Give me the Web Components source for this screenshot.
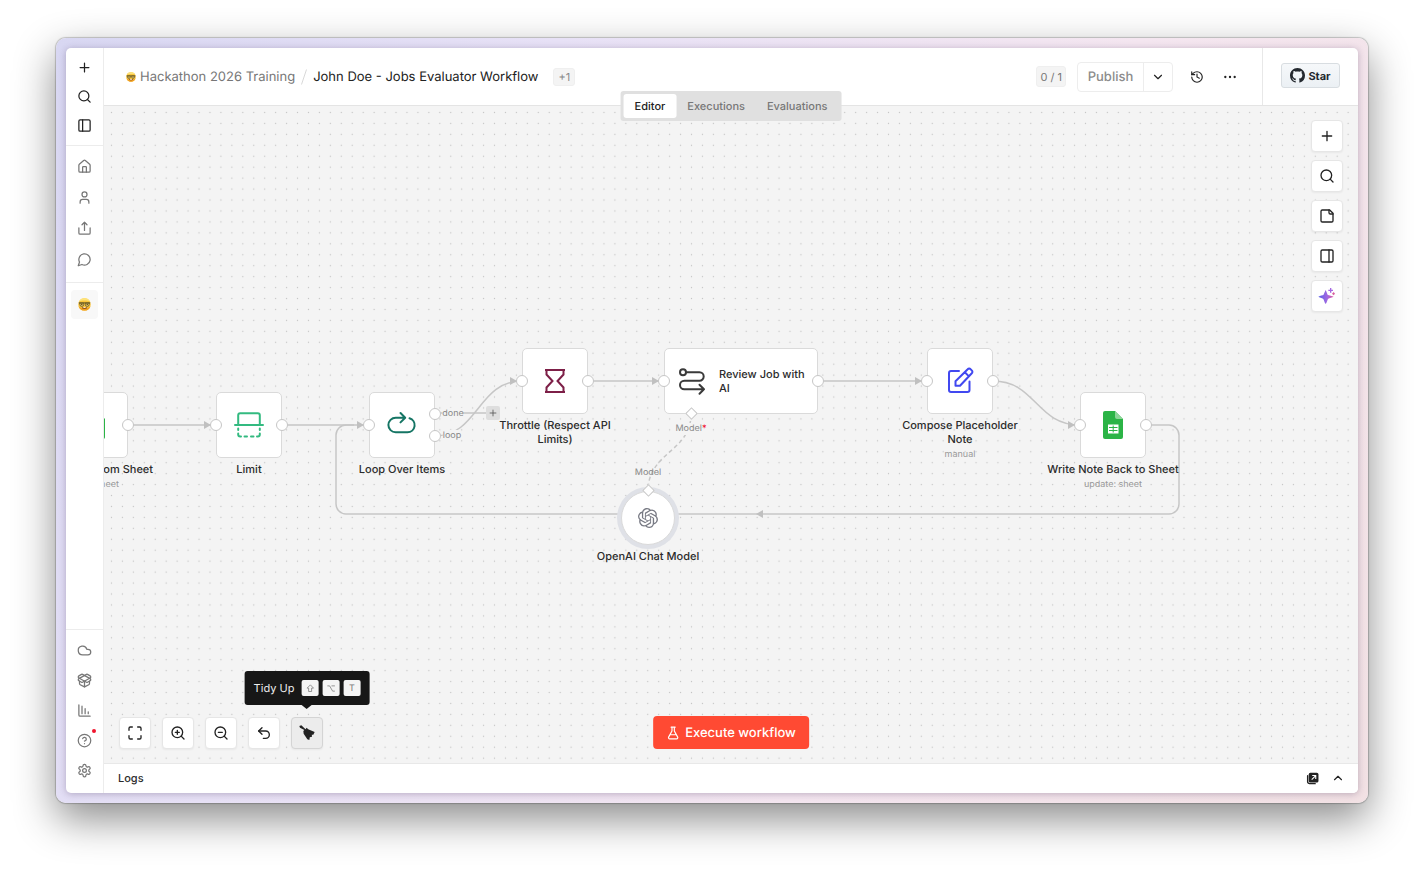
<!DOCTYPE html>
<html lang="en">
<head>
<meta charset="utf-8">
<meta name="viewport" content="width=device-width, initial-scale=1">
<title>John Doe - Jobs Evaluator Workflow</title>
<style>
    body {
        margin: 0;
        font-family: Inter, "Liberation Sans", sans-serif;
        font-size: 11px;
        text-rendering: geometricPrecision;
        color: #2b2b2b;
        background: #fff;
        --line: #ececec;
        --canvas: #f4f4f4;
        --muted: #777;
    }
</style>
</head>
<body>
<app-window>
    <side-bar slot="side"></side-bar>
    <top-bar slot="top"></top-bar>
    <work-flow slot="main"></work-flow>
    <logs-bar slot="bottom"></logs-bar>
</app-window>

<script>
const reset = `
    * { margin: 0; padding: 0; box-sizing: border-box; }
    button { font: inherit; color: inherit; background: none; border: 0; cursor: pointer; text-rendering: inherit; }
    a { color: inherit; text-decoration: none; }
`;

// 24x24 stroke icons
const strokeIcons = {
    "plus": `<path d="M5 12h14M12 5v14"/>`,
    "search": `<circle cx="11" cy="11" r="8"/><path d="m21 21-4.3-4.3"/>`,
    "panel-left": `<rect x="3" y="3" width="18" height="18" rx="2"/><path d="M9 3v18"/>`,
    "panel-right": `<rect x="3" y="3" width="18" height="18" rx="2"/><path d="M15 3v18"/>`,
    "house": `<path d="M15 21v-8a1 1 0 0 0-1-1h-4a1 1 0 0 0-1 1v8"/><path d="M3 10a2 2 0 0 1 .709-1.528l7-5.999a2 2 0 0 1 2.582 0l7 5.999A2 2 0 0 1 21 10v9a2 2 0 0 1-2 2H5a2 2 0 0 1-2-2z"/>`,
    "user": `<path d="M19 21v-2a4 4 0 0 0-4-4H9a4 4 0 0 0-4 4v2"/><circle cx="12" cy="7" r="4"/>`,
    "share": `<path d="M3 11v8a2 2 0 0 0 2 2h14a2 2 0 0 0 2-2v-8M16 6l-4-4-4 4M12 2v13"/>`,
    "message": `<path d="M7.9 20A9 9 0 1 0 4 16.1L2 22Z"/>`,
    "cloud": `<path d="M17.5 19H9a7 7 0 1 1 6.71-9h1.79a4.5 4.5 0 1 1 0 9Z"/>`,
    "package": `<path d="M12 22v-9"/><path d="M15.17 2.21a1.67 1.67 0 0 1 1.63 0L21 4.57a1.93 1.93 0 0 1 0 3.36L8.82 14.79a1.655 1.655 0 0 1-1.64 0L3 12.43a1.93 1.93 0 0 1 0-3.36z"/><path d="M20 13v3.87a2.06 2.06 0 0 1-1.11 1.83l-6 3.08a1.93 1.93 0 0 1-1.78 0l-6-3.08A2.06 2.06 0 0 1 4 16.87V13"/><path d="M21 12.43a1.93 1.93 0 0 0 0-3.36L8.83 2.2a1.64 1.64 0 0 0-1.63 0L3 4.57a1.93 1.93 0 0 0 0 3.36l12.18 6.86a1.636 1.636 0 0 0 1.63 0z"/>`,
    "chart": `<path d="M13 17V9M18 17v-3M3 3v16a2 2 0 0 0 2 2h16M8 17V5"/>`,
    "help": `<circle cx="12" cy="12" r="10"/><path d="M9.09 9a3 3 0 0 1 5.83 1c0 2-3 3-3 3M12 17h.01"/>`,
    "settings": `<path d="M12.22 2h-.44a2 2 0 0 0-2 2v.18a2 2 0 0 1-1 1.73l-.43.25a2 2 0 0 1-2 0l-.15-.08a2 2 0 0 0-2.73.73l-.22.38a2 2 0 0 0 .73 2.73l.15.1a2 2 0 0 1 1 1.72v.51a2 2 0 0 1-1 1.74l-.15.09a2 2 0 0 0-.73 2.73l.22.38a2 2 0 0 0 2.73.73l.15-.08a2 2 0 0 1 2 0l.43.25a2 2 0 0 1 1 1.73V20a2 2 0 0 0 2 2h.44a2 2 0 0 0 2-2v-.18a2 2 0 0 1 1-1.73l.43-.25a2 2 0 0 1 2 0l.15.08a2 2 0 0 0 2.73-.73l.22-.39a2 2 0 0 0-.73-2.73l-.15-.08a2 2 0 0 1-1-1.74v-.5a2 2 0 0 1 1-1.74l.15-.09a2 2 0 0 0 .73-2.73l-.22-.38a2 2 0 0 0-2.73-.73l-.15.08a2 2 0 0 1-2 0l-.43-.25a2 2 0 0 1-1-1.73V4a2 2 0 0 0-2-2z"/><circle cx="12" cy="12" r="3"/>`,
    "chevron-down": `<path d="m6 9 6 6 6-6"/>`,
    "chevron-up": `<path d="m18 15-6-6-6 6"/>`,
    "history": `<path d="M3 12a9 9 0 1 0 9-9 9.75 9.75 0 0 0-6.74 2.74L3 8"/><path d="M3 3v5h5M12 7v5l4 2"/>`,
    "ellipsis": `<g fill="currentColor"><circle cx="12" cy="12" r="1"/><circle cx="20" cy="12" r="1"/><circle cx="4" cy="12" r="1"/></g>`,
    "note": `<path d="M16 3H5a2 2 0 0 0-2 2v14a2 2 0 0 0 2 2h14a2 2 0 0 0 2-2V8Z"/><path d="M15 3v4a2 2 0 0 0 2 2h4"/>`,
    "maximize": `<path d="M8 3H5a2 2 0 0 0-2 2v3M21 8V5a2 2 0 0 0-2-2h-3M3 16v3a2 2 0 0 0 2 2h3M16 21h3a2 2 0 0 0 2-2v-3"/>`,
    "zoom-in": `<circle cx="11" cy="11" r="8"/><path d="m21 21-4.3-4.3M11 8v6M8 11h6"/>`,
    "zoom-out": `<circle cx="11" cy="11" r="8"/><path d="m21 21-4.3-4.3M8 11h6"/>`,
    "undo": `<path d="M9 14 4 9l5-5"/><path d="M4 9h10.5a5.5 5.5 0 0 1 0 11H11"/>`,
    "flask": `<path d="M14 2v6a2 2 0 0 0 .245.96l5.51 10.08A2 2 0 0 1 18 22H6a2 2 0 0 1-1.755-2.96l5.51-10.08A2 2 0 0 0 10 8V2M6.453 15h11.094M8.5 2h7"/>`,
    "key-shift": `<path d="M12 3 4 11h4v9h8v-9h4z"/>`,
    "key-option": `<path d="M3 5h5l8 14h5M14 5h7"/>`
};

// icons that bring their own viewBox and paint
const paintedIcons = {
    "nerd": ["0 0 24 24", `
        <circle cx="12" cy="12" r="11.5" fill="#fbc63c"/>
        <path d="M2 6a11.500 11.500 0 0 1 20 0c-5-2-15-2-20 0z" fill="#fde27a"/>
        <path d="M1 15a11.5 11.5 0 0 0 22 0c-5 5-17 5-22 0z" fill="#ef9f25"/>
        <path d="M7 17h10a5 3.500 0 0 1-10 0z" fill="#9a5518"/><path d="M10 17h4v1.500h-4z" fill="#fff"/>
        <path d="M3 9.500h7.500v2.500a3.500 3.500 0 0 1-7 0zM13.500 9.500H21l-.5 2.500a3.500 3.500 0 0 1-7 0z" fill="#f0d873" stroke="#5c4f22" stroke-width="1.500"/>
        <path d="M1.500 9h21" stroke="#5c4f22" stroke-width="1.800"/>
        <circle cx="7" cy="12" r="1.300" fill="#5b3a14"/><circle cx="17" cy="12" r="1.300" fill="#5b3a14"/>`],
    "github": ["0 0 16 16", `<path fill="#24292f" d="M8 0c4.420 0 8 3.580 8 8a8.013 8.013 0 0 1-5.450 7.590c-.4.080-.55-.17-.55-.38 0-.27.010-1.130.010-2.200 0-.75-.25-1.230-.54-1.480 1.780-.2 3.650-.88 3.650-3.950 0-.88-.31-1.590-.82-2.150.080-.2.360-1.020-.08-2.120 0 0-.67-.22-2.200.820-.64-.18-1.320-.27-2-.27-.68 0-1.360.090-2 .27-1.530-1.030-2.200-.82-2.200-.82-.44 1.100-.16 1.920-.08 2.120-.51.560-.82 1.280-.82 2.150 0 3.060 1.860 3.750 3.640 3.950-.23.2-.44.550-.51 1.070-.46.210-1.610.550-2.330-.66-.15-.24-.6-.83-1.230-.82-.67.010-.27.380.010.530.340.190.730.9.820 1.130.160.450.680 1.310 2.690.940 0 .67.010 1.300.010 1.490 0 .21-.15.450-.55.380A7.995 7.995 0 0 1 0 8c0-4.420 3.580-8 8-8Z"/>`],
    "sparkle": ["0 0 24 24", `
        <defs><linearGradient id="g" x1="0" x2="1"><stop offset="0" stop-color="#5b60e8"/><stop offset=".6" stop-color="#a468e0"/><stop offset="1" stop-color="#e0559a"/></linearGradient></defs>
        <path fill="url(#g)" d="M10 3c1.800 3.500 2.500 7 3.500 7.500S20 12 22 13c-4 2-7.500 2-8.500 3.500S12 21.500 10 24c-2-2.500-2.500-6-3.500-7.500S2 15 -1 13c3-2 6.500-1.500 7.500-2.500S8.200 6.500 10 3z"/>
        <path stroke="#a468e0" stroke-width="2" d="M17.500 0v7M14 3.500h7"/>
        <path fill="#d9609f" d="m22 6 2 2.500-2 2.500-2.500-2.500z"/>`],
    "broom": ["0 0 24 24", `
        <path fill="#222" d="M.5 1.500 3.500.3l6.300 6L11.500 4l2.300 2.300L23.500 10.500l-2 4-2.300.3.300 2.700-3.300 1-.7 4-3-1.200-5.500-8-.5-4.300L8 7.500 1.500 4z"/>`],
    "popout": ["0 0 24 24", `
        <path d="M3 7v11a3.500 3.500 0 0 0 3.500 3.500H17" fill="none" stroke="#222" stroke-width="2.500" stroke-linecap="round"/>
        <rect x="5" y="1.500" width="18" height="18" rx="3" fill="#222"/>
        <path d="M10.500 14 17 7.500M11.500 6.500H18V13" fill="none" stroke="#fff" stroke-width="2"/>`],
    "limit": ["0 0 30 30", `
        <g fill="none" stroke="#33ba80" stroke-width="2" stroke-linecap="round">
        <path d="M1 15h28M4.200 15V5.200a2 2 0 0 1 2-2h17.600a2 2 0 0 1 2 2V15"/>
        <path d="M4.200 18.500v1.500M4.200 23.500v1a2 2 0 0 0 2 2h.8M10.500 26.500h2.500M17 26.500h2.500M23 26.500h.8a2 2 0 0 0 2-2v-1M25.800 20v-1.500"/></g>`],
    "loop": ["0 0 30 30", `
        <path fill="none" stroke="#157564" stroke-width="2" stroke-linecap="round" stroke-linejoin="round"
        d="M22.500 8.200a7.200 7.200 0 0 1-2 14.100H8.700A7.300 7.300 0 0 1 8.700 7.700H18M13.500 3l4.700 4.700-4.700 4.700"/>`],
    "hourglass": ["0 0 30 30", `
        <path fill="none" stroke="#7d1f47" stroke-width="2" d="M5 4h20M5 26h20M6.500 4v4.500l6 6.500-6 6.500V26M23.500 4v4.500l-6 6.500 6 6.500V26"/>`],
    "route": ["0 0 30 30", `
        <g fill="none" stroke="#3a3a3a" stroke-width="2" stroke-linecap="round" stroke-linejoin="round">
        <circle cx="6" cy="6.300" r="3"/><path d="M9 6.300h13.500a4.200 4.200 0 0 1 0 8.400H7.300a4.300 4.300 0 0 0 0 8.600H27M22.500 18.800l4.500 4.500-4.500 4.500"/></g>`],
    "pen": ["0 0 30 30", `
        <g fill="none" stroke="#4148f0" stroke-width="2" stroke-linecap="round" stroke-linejoin="round">
        <path d="M14 5H6a2 2 0 0 0-2 2v17a2 2 0 0 0 2 2h16.500a2 2 0 0 0 2-2v-8.500"/>
        <path d="M10.500 19.800v-4.600L22.700 3.200a2 2 0 0 1 2.900 0l1.200 1.200a2 2 0 0 1 0 2.900L15 19.800zM19.800 6.200l4.200 4.200"/></g>`],
    "sheets": ["0 0 30 30", `
        <path fill="#2bb446" d="M7 1h10l8 8v18a2 2 0 0 1-2 2H7a2 2 0 0 1-2-2V3a2 2 0 0 1 2-2z"/>
        <path fill="#8ed69a" d="M17 1l8 8h-6a2 2 0 0 1-2-2z"/>
        <path fill="#fff" d="M10 14.500h10.500v9H10z"/><path stroke="#2bb446" d="M11 17.500h8.500M11 20.500h8.500M15.200 15.500v7"/>`],
    "openai": ["0 0 24 24", `<path fill="#777983" d="M22.2819 9.8211a5.9847 5.9847 0 0 0-.5157-4.9108 6.0462 6.0462 0 0 0-6.5098-2.9A6.0651 6.0651 0 0 0 4.9807 4.1818a5.9847 5.9847 0 0 0-3.9977 2.9 6.0462 6.0462 0 0 0 .7427 7.0966 5.98 5.98 0 0 0 .511 4.9107 6.051 6.051 0 0 0 6.5146 2.9001A5.9847 5.9847 0 0 0 13.2599 24a6.0557 6.0557 0 0 0 5.7718-4.2058 5.9894 5.9894 0 0 0 3.9977-2.9001 6.0557 6.0557 0 0 0-.7475-7.0729zm-9.022 12.6081a4.4755 4.4755 0 0 1-2.8764-1.0408l.1419-.0804 4.7783-2.7582a.7948.7948 0 0 0 .3927-.6813v-6.7369l2.02 1.1686a.071.071 0 0 1 .038.052v5.5826a4.504 4.504 0 0 1-4.4945 4.4944zm-9.6607-4.1254a4.4708 4.4708 0 0 1-.5346-3.0137l.142.0852 4.783 2.7582a.7712.7712 0 0 0 .7806 0l5.8428-3.3685v2.3324a.0804.0804 0 0 1-.0332.0615L9.74 19.9502a4.4992 4.4992 0 0 1-6.1408-1.6464zM2.3408 7.8956a4.485 4.485 0 0 1 2.3655-1.9728V11.6a.7664.7664 0 0 0 .3879.6765l5.8144 3.3543-2.0201 1.1685a.0757.0757 0 0 1-.071 0l-4.8303-2.7865A4.504 4.504 0 0 1 2.3408 7.8956zm16.5963 3.8558L13.1038 8.364 15.1192 7.2a.0757.0757 0 0 1 .071 0l4.8303 2.7913a4.4944 4.4944 0 0 1-.6765 8.1042v-5.6772a.79.79 0 0 0-.407-.667zm2.0107-3.0231l-.142-.0852-4.7735-2.7818a.7759.7759 0 0 0-.7854 0L9.409 9.2297V6.8974a.0662.0662 0 0 1 .0284-.0615l4.8303-2.7866a4.4992 4.4992 0 0 1 6.6802 4.66zM8.3065 12.863l-2.02-1.1638a.0804.0804 0 0 1-.038-.0567V6.0742a4.4992 4.4992 0 0 1 7.3757-3.4537l-.142.0805L8.704 5.459a.7948.7948 0 0 0-.3927.6813zm1.0976-2.3654l2.602-1.4998 2.6069 1.4998v2.9994l-2.5974 1.4997-2.6067-1.4997Z"/>`]
};

class UiIcon extends HTMLElement {
    constructor() {
        super();
        this.attachShadow({mode: "open"});
    }

    connectedCallback() {
        const name = this.getAttribute("name");
        const size = this.getAttribute("size") || 16;
        const painted = paintedIcons[name];
        const viewBox = painted ? painted[0] : "0 0 24 24";
        const paint = painted ? "" : `fill="none" stroke="currentColor" stroke-width="2" stroke-linecap="round" stroke-linejoin="round"`;
        this.shadowRoot.innerHTML = `
        <style>
            :host { display: block; flex: none; }
            svg { display: block; overflow: visible; }
        </style>
        <svg width="${size}" height="${size}" viewBox="${viewBox}" ${paint} aria-hidden="true">${painted ? painted[1] : strokeIcons[name]}</svg>`;
    }
}
customElements.define("ui-icon", UiIcon);

class AppWindow extends HTMLElement {
    constructor() {
        super();
        this.attachShadow({mode: "open"}).innerHTML = `
        <style>
            ${reset}
            :host {
                display: grid;
                box-sizing: border-box;
                height: 100vh;
                padding: 38px 56px 74px;
            }
            .frame {
                display: grid;
                padding: 10px;
                border-radius: 10px;
                background: linear-gradient(115deg, #d8d7f2, #e7e1f6 30%, #f4e6f0 65%, #f2e1e4);
                box-shadow: 0 0 1px 1px rgba(0, 0, 0, .2), 0 16px 42px rgba(0, 0, 0, .46);
                min-height: 0;
            }
            .app {
                display: grid;
                grid-template-columns: 38px 1fr;
                min-height: 0;
                border-radius: 5px;
                background: #fff;
                box-shadow: 0 1px 7px rgba(60, 40, 80, .3);
                overflow: hidden;
            }
            .page { display: flex; flex-direction: column; min-width: 0; min-height: 0; }
        </style>
        <div class="frame">
            <div class="app">
                <slot name="side"></slot>
                <div class="page">
                    <slot name="top"></slot>
                    <slot name="main"></slot>
                    <slot name="bottom"></slot>
                </div>
            </div>
        </div>`;
    }
}
customElements.define("app-window", AppWindow);

class SideBar extends HTMLElement {
    constructor() {
        super();
        this.attachShadow({mode: "open"}).innerHTML = `
        <style>
            ${reset}
            :host {
                display: flex;
                flex-direction: column;
                border-right: 1px solid var(--line);
                box-sizing: border-box;
            }
            .group { display: flex; flex-direction: column; align-items: stretch; color: var(--muted); }
            .group > * { display: flex; align-items: center; justify-content: center; height: 31px; position: relative; }
            .group + .group { border-top: 1px solid var(--line); }
            .main { padding: 5px 0; color: #222; }
            .main > * { height: 29px; }
            .nav { padding: 5px 0 7px; }
            .projects { padding: 7px 5px; flex: 1; }
            .projects > a { height: 29px; border-radius: 4px; background: #f8f8f8; }
            .foot { padding: 5px 0 8px; }
            .foot > * { height: 30px; }
            .dot { position: absolute; top: 4px; right: 7px; width: 4px; height: 4px; border-radius: 50%; background: #f0152d; }
        </style>
        <div class="group main">
            <button aria-label="New"><ui-icon name="plus" size="15"></ui-icon></button>
            <button aria-label="Search"><ui-icon name="search" size="15"></ui-icon></button>
            <button aria-label="Toggle sidebar"><ui-icon name="panel-left" size="15"></ui-icon></button>
        </div>
        <nav class="group nav">
            <a href="#home" aria-label="Home"><ui-icon name="house" size="15"></ui-icon></a>
            <a href="#personal" aria-label="Personal"><ui-icon name="user" size="15"></ui-icon></a>
            <a href="#shared" aria-label="Shared"><ui-icon name="share" size="15"></ui-icon></a>
            <a href="#chat" aria-label="Chat"><ui-icon name="message" size="15"></ui-icon></a>
        </nav>
        <div class="group projects">
            <a href="#project" aria-label="Project"><ui-icon name="nerd" size="13"></ui-icon></a>
        </div>
        <div class="group foot">
            <a href="#admin" aria-label="Admin"><ui-icon name="cloud" size="15"></ui-icon></a>
            <a href="#templates" aria-label="Templates"><ui-icon name="package" size="15"></ui-icon></a>
            <a href="#insights" aria-label="Insights"><ui-icon name="chart" size="15"></ui-icon></a>
            <a href="#help" aria-label="Help"><ui-icon name="help" size="15"></ui-icon><span class="dot"></span></a>
            <a href="#settings" aria-label="Settings"><ui-icon name="settings" size="15"></ui-icon></a>
        </div>`;
    }
}
customElements.define("side-bar", SideBar);

class TopBar extends HTMLElement {
    constructor() {
        super();
        this.attachShadow({mode: "open"}).innerHTML = `
        <style>
            ${reset}
            :host {
                display: flex;
                align-items: stretch;
                flex: none;
                height: 58px;
                box-sizing: border-box;
                border-bottom: 1px solid #e4e4e4;
                position: relative;
                z-index: 1;
                font-size: 13px;
            }
            .crumbs { display: flex; align-items: center; flex: 1; min-width: 0; padding-left: 22px; white-space: nowrap; }
            .crumbs a { display: flex; align-items: center; gap: 4px; color: var(--muted); }
            .crumbs svg { margin: 0 5px; }
            h1 { font-size: 13px; font-weight: 400; color: #222; }
            .tag {
                display: flex;
                align-items: center;
                height: 18px;
                padding: 0 4px;
                border-radius: 3px;
                border: 1px solid #efefef;
                background: #f4f4f4;
                color: #888;
                font-size: 11px;
            }
            .crumbs .tag { margin-left: 15px; }
            .actions { display: flex; align-items: center; }
            .count { height: 21px; padding: 0 3px; color: #777; }
            .publish {
                display: flex;
                height: 30px;
                margin: 0 17px 0 11px;
                border: 1px solid #ededed;
                border-radius: 4px;
                color: #8c8c8c;
            }
            .publish button { display: flex; align-items: center; justify-content: center; width: 28px; color: #222; }
            .publish button:first-child { width: 66px; border-right: 1px solid #ededed; color: #8c8c8c; font-weight: 500; }
            .actions > button { display: flex; align-items: center; justify-content: center; width: 14px; height: 24px; margin-right: 19px; color: #222; }
            .actions > button:last-child { margin-right: 25px; }
            .star { display: flex; align-items: center; padding: 0 18px 2px; border-left: 1px solid #e8e8e8; }
            .star a {
                display: flex;
                align-items: center;
                justify-content: center;
                gap: 3px;
                width: 59px;
                height: 25px;
                border: 1px solid #d8dde1;
                border-radius: 3px;
                background: linear-gradient(#f6f8fa, #ebf0f4);
                font-size: 11px;
                font-weight: 700;
                color: #24292f;
            }
            /* straddles the header edge */
            .tabs {
                position: absolute;
                left: 50%;
                bottom: -16px;
                transform: translateX(-50%);
                display: flex;
                padding: 3px;
                border-radius: 3px;
                background: #e0e0e0;
                font-size: 11px;
                font-weight: 500;
                color: #777;
            }
            .tabs a { padding: 0 11px; height: 24px; line-height: 24px; border-radius: 3px; }
            .tabs .on { background: #fff; color: #222; }
        </style>
        <div class="crumbs">
            <a href="#project"><ui-icon name="nerd" size="10"></ui-icon>Hackathon 2026 Training</a>
            <svg width="8" height="16" viewBox="0 0 8 16"><path d="M6.500.5 1.500 15.500" stroke="#d8d8d8" fill="none"/></svg>
            <h1>John Doe - Jobs Evaluator Workflow</h1>
            <span class="tag">+1</span>
        </div>
        <div class="actions">
            <span class="tag count">0 / 1</span>
            <div class="publish">
                <button>Publish</button>
                <button aria-label="More publish options"><ui-icon name="chevron-down" size="14"></ui-icon></button>
            </div>
            <button aria-label="History"><ui-icon name="history" size="14"></ui-icon></button>
            <button aria-label="More"><ui-icon name="ellipsis" size="14"></ui-icon></button>
        </div>
        <div class="star"><a href="#star"><ui-icon name="github" size="15"></ui-icon>Star</a></div>
        <nav class="tabs">
            <a class="on" href="#editor">Editor</a>
            <a href="#executions">Executions</a>
            <a href="#evaluations">Evaluations</a>
        </nav>`;
    }
}
customElements.define("top-bar", TopBar);

class ToolButton extends HTMLElement {
    constructor() {
        super();
        this.attachShadow({mode: "open"});
    }

    connectedCallback() {
        this.shadowRoot.innerHTML = `
        <style>
            ${reset}
            :host { display: block; position: relative; }
            button {
                display: flex;
                align-items: center;
                justify-content: center;
                width: 32px;
                height: 32px;
                border: 1px solid #e6e6e6;
                border-radius: 4px;
                background: #fff;
                box-shadow: 0 1px 2px rgba(0, 0, 0, .05);
                color: #222;
            }
            :host([active]) button { background: #ececec; border-color: #d4d4d4; }
        </style>
        <button aria-label="${this.getAttribute("label")}"><ui-icon name="${this.getAttribute("icon")}" size="16"></ui-icon></button>
        <slot></slot>`;
    }
}
customElements.define("tool-button", ToolButton);

class KeyTip extends HTMLElement {
    constructor() {
        super();
        this.attachShadow({mode: "open"}).innerHTML = `
        <style>
            ${reset}
            :host {
                position: absolute;
                bottom: 44px;
                left: 50%;
                transform: translateX(-50%);
            }
            .tip {
                display: flex;
                align-items: center;
                gap: 4px;
                height: 34px;
                padding: 0 9px;
                border-radius: 3px;
                background: #171717;
                color: #eee;
                white-space: nowrap;
            }
            .tip::after {
                content: "";
                position: absolute;
                top: 100%;
                left: 50%;
                margin-left: -5px;
                border: 5px solid transparent;
                border-top: 4px solid #171717;
                border-bottom: 0;
            }
            span { margin-right: 3px; }
            kbd {
                display: flex;
                align-items: center;
                justify-content: center;
                width: 17px;
                height: 16px;
                border-radius: 2px;
                background: #f4f4f4;
                color: #777;
                font: inherit;
                font-size: 9px;
            }
        </style>
        <div class="tip">
            <span><slot></slot></span>
            <kbd><ui-icon name="key-shift" size="9"></ui-icon></kbd>
            <kbd><ui-icon name="key-option" size="9"></ui-icon></kbd>
            <kbd>T</kbd>
        </div>`;
    }
}
customElements.define("key-tip", KeyTip);

// <flow-node x y icon label sub in out="1|2" shape="wide|round">
class FlowNode extends HTMLElement {
    constructor() {
        super();
        this.attachShadow({mode: "open"});
    }

    connectedCallback() {
        const outs = Number(this.getAttribute("out") || 0);
        const sub = this.getAttribute("sub");
        const size = this.getAttribute("shape") === "round" ? 20 : 30;
        this.style.left = this.getAttribute("x") + "px";
        this.style.top = this.getAttribute("y") + "px";
        this.shadowRoot.innerHTML = `
        <style>
            ${reset}
            :host { position: absolute; width: 66px; }
            .box {
                position: relative;
                display: flex;
                align-items: center;
                justify-content: center;
                height: 66px;
                border: 1px solid #dadada;
                border-radius: 5px;
                background: #fff;
            }
            .text { width: 134px; margin: 4px -34px 0; text-align: center; line-height: 14px; font-weight: 500; }
            .text small { display: block; margin-top: 3px; font-size: 9px; line-height: 12px; font-weight: 400; color: #999; }
            .port {
                position: absolute;
                top: 26px;
                width: 12px;
                height: 12px;
                border: 1px solid #c6c6c6;
                border-radius: 50%;
                background: #fff;
            }
            .in { left: -7px; }
            .out { right: -7px; }
            .first { top: 15px; }
            .second { top: 37px; }
            .diamond { width: 9px; height: 9px; border-radius: 0; transform: rotate(45deg); }
            :host([shape="wide"]) { width: 154px; }
            :host([shape="wide"]) .box { justify-content: flex-start; gap: 12px; padding-left: 12px; }
            :host([shape="wide"]) .text { width: 90px; margin: 0; text-align: left; }
            :host([shape="wide"]) .diamond { top: 60px; left: 22px; }
            :host([shape="round"]) { width: 54px; }
            :host([shape="round"]) .box { height: 54px; border-radius: 50%; box-shadow: 0 0 0 4px #dfe1e7; }
            :host([shape="round"]) .text { margin: 4px -40px 0; }
            :host([shape="round"]) .diamond { top: -6px; left: 22px; }
        </style>
        <div class="box">
            <ui-icon name="${this.getAttribute("icon")}" size="${size}"></ui-icon>
            ${this.getAttribute("shape") === "wide" ? `<div class="text">${this.getAttribute("label")}</div>` : ""}
            ${this.hasAttribute("in") ? `<i class="port in"></i>` : ""}
            ${outs === 1 ? `<i class="port out"></i>` : ""}
            ${outs === 2 ? `<i class="port out first"></i><i class="port out second"></i>` : ""}
            ${this.hasAttribute("shape") ? `<i class="port diamond"></i>` : ""}
        </div>
        ${this.getAttribute("shape") === "wide" ? "" : `<div class="text">${this.getAttribute("label")}${sub ? `<small>${sub}</small>` : ""}</div>`}`;
    }
}
customElements.define("flow-node", FlowNode);

class WorkFlow extends HTMLElement {
    constructor() {
        super();
        this.attachShadow({mode: "open"}).innerHTML = `
        <style>
            ${reset}
            :host { display: block; position: relative; flex: 1; min-height: 0; overflow: hidden; background: var(--canvas); }
            .edges { position: absolute; inset: 0; width: 100%; height: 100%; }
            .edge-label { position: absolute; transform: translate(-50%, -50%); font-size: 9px; line-height: 12px; color: #888; }
            .edge-label.solid { background: var(--canvas); }
            .edge-label b { color: #f0152d; font-weight: 500; }
            .add {
                position: absolute;
                left: 382px;
                top: 300px;
                display: flex;
                align-items: center;
                justify-content: center;
                width: 14px;
                height: 14px;
                border-radius: 2px;
                background: #dedede;
                color: #555;
            }
            .tools { position: absolute; top: 14px; right: 15px; display: flex; flex-direction: column; gap: 8px; }
            .zoom { position: absolute; left: 15px; bottom: 14px; display: flex; gap: 11px; }
            .run {
                position: absolute;
                left: 50%;
                bottom: 14px;
                transform: translateX(-50%);
                display: flex;
                align-items: center;
                gap: 5px;
                height: 33px;
                padding: 0 13px;
                border-radius: 4px;
                background: #ff4a33;
                color: #fff;
                font-size: 13px;
                font-weight: 500;
                white-space: nowrap;
            }
        </style>
        <svg class="edges">
            <defs>
                <!-- 16 unit grid at the current zoom level -->
                <pattern id="grid" width="16" height="16" patternUnits="userSpaceOnUse" patternTransform="translate(2 1) scale(.684)">
                    <circle cx="8" cy="8" r="1" fill="#c4c4c4"/>
                </pattern>
                <marker id="arrow" markerWidth="7" markerHeight="8" refX="12" refY="4" orient="auto" markerUnits="userSpaceOnUse">
                    <path d="M0 0l7 4-7 4z" fill="#c0c0c0"/>
                </marker>
            </defs>
            <rect width="100%" height="100%" fill="url(#grid)"/>
            <g fill="none" stroke="#c6c6c6" stroke-width="1.5">
                <path d="M24 319H112" marker-end="url(#arrow)"/>
                <path d="M177 319H265" marker-end="url(#arrow)"/>
                <path d="M331 307H383"/>
                <path d="M331 330C374 330 374 275 418 275" marker-end="url(#arrow)"/>
                <path d="M484 275H560" marker-end="url(#arrow)"/>
                <path d="M714 275H823" marker-end="url(#arrow)"/>
                <path d="M889 275C932 275 932 319 976 319" marker-end="url(#arrow)"/>
                <path d="M1042 319H1065a10 10 0 0 1 10 10V398a10 10 0 0 1-10 10H242a10 10 0 0 1-10-10V329a10 10 0 0 1 10-10H250"/>
                <path d="M587 308C587 346 544 346 544 385" stroke-dasharray="4 3"/>
            </g>
            <path d="M652 408l7-4v8z" fill="#c0c0c0"/>
        </svg>
        <span class="edge-label solid" style="left: 349px; top: 308px">done</span>
        <span class="edge-label solid" style="left: 348px; top: 330px">loop</span>
        <span class="edge-label solid" style="left: 587px; top: 323px">Model<b>*</b></span>
        <span class="edge-label" style="left: 544px; top: 367px">Model</span>
        <button class="add" aria-label="Add node"><ui-icon name="plus" size="10"></ui-icon></button>

        <flow-node x="-42" y="286" icon="sheets" label="Read Jobs from Sheet" sub="read: sheet" out="1"></flow-node>
        <flow-node x="112" y="286" icon="limit" label="Limit" in out="1"></flow-node>
        <flow-node x="265" y="286" icon="loop" label="Loop Over Items" in out="2"></flow-node>
        <flow-node x="418" y="242" icon="hourglass" label="Throttle (Respect API Limits)" in out="1"></flow-node>
        <flow-node x="560" y="242" icon="route" label="Review Job with AI" in out="1" shape="wide"></flow-node>
        <flow-node x="823" y="242" icon="pen" label="Compose Placeholder Note" sub="manual" in out="1"></flow-node>
        <flow-node x="976" y="286" icon="sheets" label="Write Note Back to Sheet" sub="update: sheet" in out="1"></flow-node>
        <flow-node x="517" y="385" icon="openai" label="OpenAI Chat Model" shape="round"></flow-node>

        <div class="tools">
            <tool-button icon="plus" label="Add node"></tool-button>
            <tool-button icon="search" label="Search"></tool-button>
            <tool-button icon="note" label="Add sticky note"></tool-button>
            <tool-button icon="panel-right" label="Open panel"></tool-button>
            <tool-button icon="sparkle" label="Assistant"></tool-button>
        </div>
        <div class="zoom">
            <tool-button icon="maximize" label="Fit view"></tool-button>
            <tool-button icon="zoom-in" label="Zoom in"></tool-button>
            <tool-button icon="zoom-out" label="Zoom out"></tool-button>
            <tool-button icon="undo" label="Reset zoom"></tool-button>
            <tool-button icon="broom" label="Tidy up" active><key-tip>Tidy Up</key-tip></tool-button>
        </div>
        <button class="run"><ui-icon name="flask" size="14"></ui-icon>Execute workflow</button>`;
    }
}
customElements.define("work-flow", WorkFlow);

class LogsBar extends HTMLElement {
    constructor() {
        super();
        this.attachShadow({mode: "open"}).innerHTML = `
        <style>
            ${reset}
            :host {
                display: flex;
                align-items: center;
                flex: none;
                gap: 12px;
                height: 30px;
                box-sizing: border-box;
                padding: 0 13px 1px 14px;
                border-top: 1px solid #e8e8e8;
                background: #fff;
            }
            h2 { flex: 1; font-size: 11px; font-weight: 500; }
            button { color: #222; }
        </style>
        <h2>Logs</h2>
        <button aria-label="Pop out"><ui-icon name="popout" size="13"></ui-icon></button>
        <button aria-label="Open logs"><ui-icon name="chevron-up" size="14"></ui-icon></button>`;
    }
}
customElements.define("logs-bar", LogsBar);
</script>
</body>
</html>
